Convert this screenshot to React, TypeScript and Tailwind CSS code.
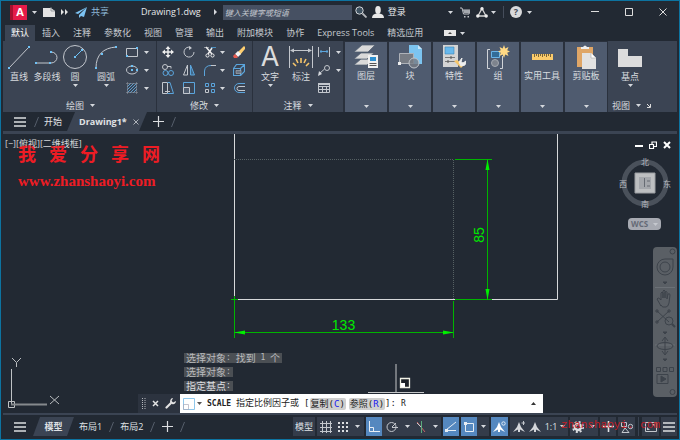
import { useState, type ReactNode } from 'react'

const ribbonTabs = ['默认', '插入', '注释', '参数化', '视图', '管理', '输出', '附加模块', '协作', 'Express Tools', '精选应用']

function Caret({ className = 'text-[#d5d8dd]' }: { className?: string }) {
  return (
    <svg width="5" height="3" viewBox="0 0 5 3" className={`shrink-0 ${className}`}>
      <path d="M0 0h5L2.5 3z" fill="currentColor" />
    </svg>
  )
}

function Icon({ w, h = w, children }: { w: number; h?: number; children: ReactNode }) {
  return (
    <svg width={w} height={h} viewBox={`0 0 ${w} ${h}`} fill="none" stroke="#c3c7cd" strokeWidth="1" className="shrink-0">
      {children}
    </svg>
  )
}

function Dots({ at }: { at: number[][] }) {
  return (
    <g fill="#6ec1f5" stroke="none">
      {at.map(([x, y]) => <rect key={`${x}-${y}`} x={x - 1} y={y - 1} width="2" height="2" />)}
    </g>
  )
}

function BigTool({ label, width, caret, children }: { label: string; width: string; caret?: boolean; children: ReactNode }) {
  return (
    <button className={`flex shrink-0 flex-col items-center pt-1 ${width}`}>
      {children}
      <span className="mt-0.5 whitespace-nowrap leading-3">{label}</span>
      {caret && <span className="mt-px"><Caret /></span>}
    </button>
  )
}

function SmallTool({ label, children }: { label: string; children: ReactNode }) {
  return (
    <button aria-label={label} className="flex h-[18px] items-center justify-center gap-1.5">
      {children}
    </button>
  )
}

function Panel({ title, className, children }: { title: string; className: string; children: ReactNode }) {
  return (
    <section className={`flex shrink-0 flex-col justify-between border-r border-[#2a313d] bg-[#3b4453] ${className}`}>
      <div className="flex">{children}</div>
      <button className="flex h-[13px] items-center justify-center gap-1.5 leading-3">
        {title}<Caret />
      </button>
    </section>
  )
}

const collapsed = [
  {
    label: '图层',
    icon: (
      <Icon w={24}>
        <g fill="#d9d9d9" stroke="#4f5b6f" strokeWidth=".7">
          <path d="M0 20 7 14h13l-7 6z" /><path d="M0 14 7 8h13l-7 6z" /><path d="M0 7 8 0h13l-7 7z" />
        </g>
        <path d="M14 10h10v13H14z" fill="#f0f0f0" stroke="none" />
        <path d="M16 12h6v4h-6z" fill="#2d8fd0" stroke="none" />
        <path d="M15.500 18.500h7M15.500 20.500h7" stroke="#555" />
      </Icon>
    ),
  },
  {
    label: '块',
    icon: (
      <Icon w={24}>
        <path d="M11 0h9l4 4v15H11z" fill="#7cc4f0" stroke="none" /><path d="M20 0v4h4" fill="#c8e6fa" stroke="none" />
        <path d="M1.500 8.500h14v10h-14z" fill="#777c84" stroke="#aeb2b8" />
        <circle cx="16" cy="18" r="5" fill="#777c84" fillOpacity=".8" stroke="#c0c4ca" />
        <path d="M0 17h3v3H0z" fill="#eee" stroke="none" />
      </Icon>
    ),
  },
  {
    label: '特性',
    icon: (
      <Icon w={24}>
        <path d="M1 0h15v22H1z" fill="#d4d4d4" stroke="none" /><path d="M3 2h9v7H3z" fill="#68b8ec" stroke="#3b83b5" strokeWidth=".6" />
        <path d="M3 12.500h10M3 16.500h10" stroke="#777" /><path d="M9 11v3M6 15v3" stroke="#555" />
        <path d="m12 16 7 7 3-3-7-5z" fill="#f5c56a" stroke="none" />
        <path d="M17 17 20 13l-1 4 2 1 3-2-1 4-4 1z" fill="#eee" stroke="#eee" />
      </Icon>
    ),
  },
  {
    label: '组',
    icon: (
      <Icon w={24}>
        <path d="M4 4.500H1.500v19H4M14 23.500h2.500V11" stroke="#d0d3d8" />
        <path d="M5.500 6.500h8v6h-8z" fill="#336c98" stroke="#6bb4e8" />
        <circle cx="9" cy="18" r="3.500" fill="#7d838d" stroke="#a4a9b1" />
        <path d="m18 0 1.200 3.400L22.500 2 21.200 5.200 24 6.500l-2.800 1.200 1.300 3.200-3.300-1.300L18 13l-1.300-3.400-3.200 1.300 1.300-3.200L12 6.500l2.800-1.300L13.500 2l3.200 1.400z" fill="#ffd985" stroke="none" />
      </Icon>
    ),
  },
  {
    label: '实用工具',
    icon: (
      <Icon w={24}>
        <path d="M2 9h21v6H2z" fill="#fbcb6b" stroke="none" />
        <path d="M4.500 9v3M6.500 9v2M8.500 9v3M10.500 9v2M12.500 9v3M14.500 9v2M16.500 9v3M18.500 9v2M20.500 9v3" stroke="#7a6437" />
      </Icon>
    ),
  },
  {
    label: '剪贴板',
    icon: (
      <Icon w={24}>
        <path d="M3 2h16v20H3z" fill="#dfa667" stroke="none" /><path d="M7 2h2q2-3 4 0h2v2H7z" fill="#eee" stroke="none" />
        <path d="M8 8h9l5 5v11H8z" fill="#e2e2e2" stroke="none" /><path d="M17 8v5h5" fill="#fff" stroke="#aaa" strokeWidth=".6" />
      </Icon>
    ),
  },
]

function TitleBar() {
  return (
    <header className="flex h-6 items-center pb-0.5 pl-[9px]">
      <button aria-label="应用程序菜单" className="flex shrink-0 items-center gap-[5px]">
        <span className="flex h-[15px] w-[17px] items-center justify-center border-l-3 border-[#a5102f] bg-[#e51b48] text-[11px] leading-3 font-bold text-white">A</span>
        <Caret />
      </button>
      <button aria-label="新建" className="ml-1.5 shrink-0">
        <Icon w={12} h={10}><path d="M0 1h8l4 3v6H0z" fill="#e3e3e3" stroke="none" /><path d="M8 0v4h4" stroke="#8b8f96" strokeWidth=".8" /></Icon>
      </button>
      <button aria-label="更多" className="ml-1.5 shrink-0">
        <Icon w={7} h={6}><path d="M0 0 3 3 0 6zM4 0l3 3-3 3z" fill="#e3e3e3" stroke="none" /></Icon>
      </button>
      <button className="ml-[7px] flex shrink-0 items-center gap-1 text-[9px] text-[#8fb9d8]">
        <Icon w={12} h={11}><path d="M12 0 0 6l3 1zM12 0 4 8v3l2-2 3 1z" fill="#7cc3f3" stroke="none" /></Icon>
        共享
      </button>
      <h1 className="ml-8 shrink-0 text-[9px] text-[#e6e8ea]">Drawing1.dwg</h1>
      <svg width="3" height="6" viewBox="0 0 3 6" className="ml-[13px] shrink-0"><path d="M0 0 3 3 0 6z" fill="#d5d8dd" /></svg>
      <input aria-label="搜索" placeholder="键入关键字或短语"
        className="ml-1.5 h-[15px] w-[129px] shrink-0 bg-[#465062] px-0.5 text-[8px] italic placeholder:text-[#c2c6cd] outline-none" />
      <button aria-label="查找" className="ml-[3px] shrink-0">
        <Icon w={12}><circle cx="4.500" cy="4.500" r="3.700" stroke="#d2d5d9" fill="#3f5261" /><path d="m7.500 7.500 4 4" stroke="#b4b7bc" strokeWidth="1.800" /></Icon>
      </button>
      <button className="ml-[5px] flex shrink-0 items-center gap-1 text-[9px] text-[#e6e8ea]">
        <Icon w={12} h={12}><g fill="#e8e8e8" stroke="none"><ellipse cx="6" cy="4" rx="2.800" ry="4" /><path d="M0 12c0-3 2-4 4.500-4.500h3C10 8 12 9 12 12z" /></g></Icon>
        登录
      </button>
      <div className="flex-1" />
      <Caret />
      <button aria-label="购物车" className="ml-[7px] shrink-0">
        <Icon w={10} h={11}><path d="M0 1h2l1.500 6H9L10 3H3" stroke="#c0c3c8" /><path d="M3 3h7L9 6H4z" fill="#a4a8ae" stroke="none" /><path d="M4 9h1.500v1.500H4zM7.500 9H9v1.500H7.500z" fill="#c0c3c8" stroke="none" /></Icon>
      </button>
      <button aria-label="应用程序" className="ml-1.5 flex shrink-0 items-center gap-[3px]">
        <Icon w={12} h={11}><path d="M6 1.500 10 9H2z" stroke="#d5d5d5" strokeWidth="1.300" /><g fill="#ededed" stroke="none"><circle cx="6" cy="1.800" r="1.700" /><circle cx="1.800" cy="9" r="1.700" /><circle cx="10.200" cy="9" r="1.700" /></g></Icon>
        <Caret />
      </button>
      <span className="ml-[7px] h-3 w-px bg-[#454d5b]" />
      <button aria-label="帮助" className="ml-1.5 flex shrink-0 items-center gap-[5px]">
        <span className="flex size-3 items-center justify-center rounded-full bg-[#d8d9db] text-[9px] leading-3 font-bold text-[#434a57]">?</span>
        <Caret />
      </button>
      <div className="ml-[59px] flex shrink-0 items-center gap-[26px] pr-3">
        <button aria-label="最小化"><Icon w={8}><path d="M0 3.500h8" stroke="#ddd" /></Icon></button>
        <button aria-label="最大化"><Icon w={8}><path d="M.5.5h7v7h-7z" stroke="#ddd" /></Icon></button>
        <button aria-label="关闭"><Icon w={8}><path d="m.5.5 7 7m0-7-7 7" stroke="#ddd" /></Icon></button>
      </div>
    </header>
  )
}

function Ribbon() {
  return (
    <div className="mx-0.5 flex h-[71px] shrink-0 overflow-hidden bg-[#2a313d] text-[9px] text-[#d8dbdf]">
      <Panel title="绘图" className="w-[154px] pl-0.5">
        <BigTool label="直线" width="w-7"><Icon w={24}><path d="M2 23 22 2" /><Dots at={[[2, 23], [22, 2]]} /></Icon></BigTool>
        <BigTool label="多段线" width="w-7"><Icon w={24}><path d="M1 18h15a6 5.500 0 0 0 0-11" /><Dots at={[[1, 18], [15, 18], [16, 7]]} /></Icon></BigTool>
        <BigTool label="圆" width="w-7" caret><Icon w={24}><circle cx="12" cy="12" r="11.500" /><path d="m12 12 6-6" stroke="#6ec1f5" /><Dots at={[[12, 12], [19, 5]]} /></Icon></BigTool>
        <BigTool label="圆弧" width="w-[34px]" caret><Icon w={24}><path d="M2 23C2 10 9 3 22 2" /><Dots at={[[2, 23], [8, 9], [22, 2]]} /></Icon></BigTool>
        <div className="flex w-[28px] flex-col pt-0.5">
          <SmallTool label="矩形"><Icon w={12}><path d="M.5 2.500h11v8H.5z" /><Dots at={[[1, 10], [11, 2]]} /></Icon><Caret /></SmallTool>
          <SmallTool label="椭圆"><Icon w={12}><ellipse cx="6" cy="6" rx="5.500" ry="4" /><Dots at={[[6, 6], [6, 2], [11, 6]]} /></Icon><Caret /></SmallTool>
          <SmallTool label="图案填充"><Icon w={12}><path d="M1 5 5 1M1 8l7-7M1 11 11 1M4 11l7-7M7 11l4-4" stroke="#5b9dce" /><path d="M0 1.500h12M0 10.500h12M1.500 0v12M10.500 0v12" stroke="#8b919b" strokeWidth=".6" /></Icon><Caret /></SmallTool>
        </div>
      </Panel>

      <Panel title="修改" className="w-24">
        <div className="grid grid-cols-[21px_21px_21px_7px_24px] items-center pt-0.5">
          <SmallTool label="移动"><Icon w={12}><path d="M6 1v10M1 6h10" stroke="#eee" strokeWidth="1.400" /><path d="m6 0 2.500 3h-5zM6 12 3.500 9h5zM0 6l3-2.500v5zM12 6 9 8.500v-5z" fill="#eee" stroke="none" /></Icon></SmallTool>
          <SmallTool label="旋转"><Icon w={12}><path d="M8 1.500A5 5 0 1 0 11 6" /><path d="M6 0v4l3-2z" fill="#c3c7cd" stroke="none" /></Icon></SmallTool>
          <SmallTool label="修剪"><Icon w={12}><path d="M0 1.500h5" stroke="#8f959e" /><path d="M7 1.500h5" stroke="#4a8fc0" /><path d="m2 1 6 7M8 2 4 8" stroke="#eee" strokeWidth="1.500" /><circle cx="3.500" cy="9.500" r="1.600" stroke="#eee" /><circle cx="8.500" cy="9.500" r="1.600" stroke="#eee" /></Icon></SmallTool>
          <Caret />
          <SmallTool label="删除"><Icon w={12}><path d="m5 6 6-6 1 1v2L7 9z" fill="#ffcf70" stroke="none" /><path d="M2 8 5 5l3 3-3 3z" fill="#f4f4f4" stroke="none" /><path d="m0 10 2-2 3 3-1 1H1z" fill="#e75b50" stroke="none" /></Icon></SmallTool>

          <SmallTool label="复制"><Icon w={12}><circle cx="3" cy="3" r="2.500" /><path d="M5 2.500h4v2" /><circle cx="3.500" cy="9" r="2.500" stroke="#5ba5dc" /><circle cx="9" cy="9" r="2.500" stroke="#5ba5dc" /></Icon></SmallTool>
          <SmallTool label="镜像"><Icon w={12}><path d="M4.500 1v10H.5z" /><path d="M7.500 1v10h4z" stroke="#5ba5dc" fill="#40698b" /></Icon></SmallTool>
          <SmallTool label="圆角"><Icon w={12}><path d="M.5 12V7Q1 1.500 7 1.500" stroke="#5ba5dc" /><path d="M7 1.500h5" /></Icon></SmallTool>
          <Caret />
          <SmallTool label="分解"><Icon w={12}><path d="M.5 4.500h7v7h-7zM.5 4.500l3-4h8v7l-4 4M7.500 4.500l4-4" stroke="#5ba5dc" strokeWidth="1.200" /><path d="M3 6.500h5v3H3z" fill="#697382" stroke="#aeb3bb" strokeWidth=".6" /></Icon></SmallTool>

          <SmallTool label="拉伸"><Icon w={12}><path d="M.5.5h5v11h-5zM3 9.500h5" /><path d="M5.500.5H8l3.500 11h-6" stroke="#5ba5dc" /></Icon></SmallTool>
          <SmallTool label="缩放"><Icon w={12}><path d="M.5.5h11v11H.5z" stroke="#5ba5dc" /><path d="M.5 5.500h6v6h-6z" fill="#515d6e" /></Icon></SmallTool>
          <SmallTool label="阵列"><Icon w={12}><path d="M1.500 1.500h3v3h-3zM7.500 1.500h3v3h-3zM7.500 7.500h3v3h-3z" stroke="#5ba5dc" /><path d="M1.500 7.500h3v3h-3z" /></Icon></SmallTool>
          <Caret />
          <SmallTool label="偏移"><Icon w={12}><path d="M12 1.500H6a4.500 4.500 0 0 0 0 9h6" stroke="#5ba5dc" /><path d="M12 4.500H6a1.500 1.500 0 0 0 0 4h6" /></Icon></SmallTool>
        </div>
      </Panel>

      <Panel title="注释" className="w-[91px]">
        <BigTool label="文字" width="w-[34px]" caret>
          <span className="flex h-6 items-center font-[Inter] text-[27px] leading-6 text-[#dcdcdc]">A</span>
        </BigTool>
        <BigTool label="标注" width="w-7">
          <Icon w={24}>
            <path d="M.5 1v22M23.500 1v22M2 5.500h20" /><path d="m1 5.500 4-2v4zM23 5.500l-4-2v4z" fill="#c3c7cd" stroke="none" />
            <path d="M12 13v5M7 14l2 4M17 14l-2 4M4 18l3 3M20 18l-3 3" stroke="#f5c56a" strokeWidth="1.600" />
          </Icon>
        </BigTool>
        <div className="flex w-[28px] flex-col pt-0.5">
          <SmallTool label="线性"><Icon w={12}><path d="M.5 1v10M11.500 1v10" /><path d="M2 5.500h8M3 4v3M9 4v3" stroke="#5ba5dc" /></Icon><Caret /></SmallTool>
          <SmallTool label="引线"><Icon w={12}><circle cx="9" cy="4" r="2.500" /><path d="M6.500 5 1 10" /><path d="m0 12 1-5 3 3z" fill="#d4d7dc" stroke="none" /></Icon><Caret /></SmallTool>
          <button aria-label="表格" className="flex h-[18px] items-center pl-[3px]"><Icon w={12}><path d="M.5 1.500h11v9H.5zM.5 4.500h11M.5 7.500h11M4.500 4v6M8.500 4v6" /><path d="M0 1h12v2H0z" fill="#c3c7cd" stroke="none" /></Icon></button>
        </div>
      </Panel>

      <div className="flex shrink-0 gap-0.5 px-px">
        {collapsed.map(({ label, icon }) => (
          <button key={label} className="flex w-[42px] flex-col items-center border-t border-[#2a313d] bg-[#4f5b6f] pt-[3px] pb-1">
            {icon}
            <span className="mt-px leading-3 whitespace-nowrap">{label}</span>
            <span className="mt-auto"><Caret /></span>
          </button>
        ))}
      </div>

      <section className="flex min-w-0 flex-1 flex-col justify-between bg-[#3b4453]">
        <BigTool label="基点" width="w-11" caret>
          <Icon w={24}><path d="M0 4h10v7h14v11H0z" fill="#dcdcdc" stroke="none" /></Icon>
        </BigTool>
        <div className="flex h-[13px] items-center gap-1.5 pl-1 leading-3">
          视图<Caret />
          <Icon w={4}><path d="m0 0 3 3M0 3.500h3.500V0" stroke="#ddd" /></Icon>
        </div>
      </section>
    </div>
  )
}

function Slash() {
  return <svg width="5" height="10" viewBox="0 0 5 10" className="shrink-0"><path d="m.5 10 4-10" stroke="#565e6b" /></svg>
}

function Plus() {
  return <Icon w={11}><path d="M5.500 0v11M0 5.500h11" stroke="#dcdee1" strokeWidth="1.200" /></Icon>
}

function Burger() {
  return <Icon w={12} h={10}><path d="M0 1h12M0 5h12M0 9h12" stroke="#dcdee1" strokeWidth="1.400" /></Icon>
}

function FileTabs() {
  return (
    <div className="flex h-[19px] shrink-0 items-center pl-[13px] text-[9px] text-[#e0e2e5]">
      <button aria-label="菜单"><Burger /></button>
      <span className="ml-2"><Slash /></span>
      <button className="ml-[5px]">开始</button>
      <div className="ml-[5px] flex h-full w-[80px] items-center gap-1.5 bg-[#3b4453] pl-3 [clip-path:polygon(8px_0,100%_0,calc(100%-8px)_100%,0_100%)]">
        <button className="font-bold">Drawing1*</button>
        <button aria-label="关闭选项卡"><Icon w={6}><path d="m.5.5 5 5m0-5-5 5" stroke="#aeb3ba" /></Icon></button>
      </div>
      <button aria-label="新图形" className="ml-1.5"><Plus /></button>
      <span className="ml-[7px]"><Slash /></span>
    </div>
  )
}

function Drawing() {
  return (
    <svg width="680" height="279" viewBox="1 134 680 279" fill="none" className="absolute top-0 left-0 max-w-none">
      <path d="M234.500 134v165.500h323V134" stroke="#d6d8da" />
      <path d="M234 159.500h219.500v140" stroke="#566063" strokeDasharray="1 1" />
      <g stroke="#00b400">
        <path d="M234.500 301v37M453.500 301v37M234 332.500h220" />
        <path d="M455 159.500h37M455 299.500h37M487.500 159v141" />
        <path d="M231 299.500h7M234.500 296v7" />
      </g>
      <path d="M234 332.500l11-2v4zM454 332.500l-11-2v4zM487.500 159l-2 11h4zM487.500 300l-2-11h4z" fill="#00f000" />
      <g fill="#00e800" className="font-['Liberation_Sans'] text-[14px]" textAnchor="middle">
        <text x="343.500" y="330">133</text>
        <text transform="translate(484 235) rotate(-90)">85</text>
      </g>

      {/* crosshair and its scale badge */}
      <path d="M396 364v29M368 392.500h56" stroke="#c5c7c9" />
      <path d="M400.500 378.500h9v9h-9z" fill="#1d2127" stroke="#f1f1e6" strokeWidth="1.300" />
      <path d="M401 383h4v4h-4z" fill="#fff" />

      {/* UCS icon */}
      <path d="M11.500 404V369M8.500 401.500h6v6h-6z" stroke="#bfc2c5" />
      <path d="M11 404.500h36" stroke="#85898d" strokeWidth="2" />
      <path d="m12 358 4.500 4.500L21 358M16.500 362.500V367M50 396l9 8M59 396l-9 8" stroke="#b9bcbf" />
    </svg>
  )
}

function ViewCube() {
  return (
    <div className="absolute top-[23px] right-2 h-[52px] w-[54px] text-[8px] leading-[10px] text-[#b9bcc1]">
      <svg width="54" height="52" viewBox="0 0 54 52" className="absolute inset-0">
        <circle cx="28" cy="26" r="21" fill="none" stroke="#4a515b" strokeWidth="5" />
        <path d="M18 16h20v20H18z" fill="#bdbfc1" stroke="#9b9ea2" />
        <path d="M22 20h12v12H22z" fill="#a4a7ac" />
        <path d="M27.500 21v9M30 24h3M30 29h3" stroke="#666b73" />
      </svg>
      <span className="absolute top-0 left-6">北</span>
      <span className="absolute top-[22px] left-0.5">西</span>
      <span className="absolute top-[22px] right-0">东</span>
      <span className="absolute bottom-0 left-6">南</span>
    </div>
  )
}

function NavBar() {
  return (
    <nav className="absolute top-[113px] right-0.5 flex h-[150px] w-6 flex-col items-center rounded-sm bg-[#5a5f65]">
      <svg width="24" height="150" viewBox="0 0 24 150" fill="none" stroke="#3d434b">
        <circle cx="19.500" cy="4.500" r="2.500" />
        <path d="M4 20a8 8 0 0 1 8-8h8v8a8 8 0 0 1-16 0z" /><circle cx="12" cy="20" r="5" />
        <path d="M2 40.500h20M2 98h20" stroke="#6b7076" />
        <path d="m10 35h4l-2 2zM10 85h4l-2 2zM10 112h4l-2 2z" fill="#3d434b" />
        <path d="M8 59 4 52q1-2 3 0l1 1V46q1-2 2 0v5-7q1-2 2 0v7-6q2-1 2 0v7l1-5q2-1 2 1l-1 8q-1 4-3 4h-3q-1 0-2-2z" />
        <path d="m4 64 12 11M16 64 4 75M3 63h2v2H3zM15 63h2v2h-2zM3 74h2v2H3z" /><circle cx="16" cy="74" r="4" /><path d="m19 77 3 3" strokeWidth="2" />
        <path d="M12 91v16M9 94l3-4 3 4M9 104l3 4 3-4" /><ellipse cx="12" cy="99" rx="8" ry="3.500" />
        <path d="M3.500 120.500h4v4h-4zM10 120.500h4v4h-4zM16.500 120.500h4v4h-4zM4 127.500h11v9H4z" /><path d="m8 129 5 3-5 3z" fill="#3d434b" />
        <circle cx="19.500" cy="145" r="2.500" />
      </svg>
    </nav>
  )
}

function CommandLine() {
  const [value, setValue] = useState('R')
  const row = 'flex h-[10px] items-center bg-[#4b4f54] px-0.5 whitespace-pre'
  return (
    <div className="absolute bottom-0 left-[137px] flex w-[405px] flex-col">
      <ul className="flex flex-col items-start gap-1 pb-[3px] pl-[46px] font-['DejaVu_Sans_Mono','Noto_Sans_CJK_SC',monospace] text-[8px] text-[#b9bbbd]">
        <li className={row}><span className="text-[10px]">选择对象</span>: <span className="text-[10px]">找到</span> 1 <span className="text-[10px]">个</span></li>
        <li className={row}><span className="text-[10px]">选择对象</span>:</li>
        <li className={`${row} text-[#dddfe0]`}><span className="text-[10px]">指定基点</span>:</li>
      </ul>
      <div className="flex h-[19px]">
        <div className="flex w-[42px] shrink-0 items-center justify-between bg-[#2c333f] px-1">
          <Icon w={4} h={12}><path d="M.5 0v12M3 0v12" stroke="#b5b8bd" strokeDasharray="1 1" /></Icon>
          <button aria-label="关闭"><Icon w={7}><path d="m1 1 5 5m0-5L1 6" stroke="#e3e3e3" strokeWidth="1.500" /></Icon></button>
          <button aria-label="自定义"><Icon w={11}><path d="m1.500 9.500 5-5" stroke="#e3e3e3" strokeWidth="2.200" strokeLinecap="round" /><path d="M8 0 6.500 3l1.500 1.500L11 3c0 2-2 4-4 3L5 4c0-2 1-4 3-4z" fill="#e3e3e3" stroke="none" /></Icon></button>
        </div>
        <label className="flex min-w-0 flex-1 items-center bg-white px-[3px] font-['DejaVu_Sans_Mono','Noto_Sans_CJK_SC',monospace] text-[9px] whitespace-nowrap text-[#222]">
          <Icon w={12}><path d="M.5.5h11v11H.5z" stroke="#8fc8ec" /><path d="M.5 6.500h5v5h-5z" stroke="#aab" strokeWidth=".7" /></Icon>
          <span className="mr-[5px] ml-0.5"><Caret className="text-[#555]" /></span>
          <b className="mr-[5px] text-[8px]">SCALE</b>
          指定比例因子或
          <span className="ml-[5px]">[</span>
          <span className="rounded-xs bg-[#cfcfcf] px-px leading-3">复制(<span className="text-[#2020f0]">C</span>)</span>
          <span className="ml-[3px] rounded-xs bg-[#cfcfcf] px-px leading-3">参照(<span className="text-[#2020f0]">R</span>)</span>
          <span>]:</span>
          <input value={value} onChange={(e) => setValue(e.target.value)} className="ml-[5px] min-w-0 flex-1 text-[8px] outline-none" />
          <svg width="5" height="3" viewBox="0 0 5 3" className="mr-1"><path d="M0 3h5L2.500 0z" fill="#333" /></svg>
        </label>
      </div>
    </div>
  )
}

function Canvas() {
  return (
    <main className="relative min-h-[279px] flex-1 overflow-hidden">
      <Drawing />
      <p className="absolute top-1 left-1 text-[9px] leading-3 text-[#d5d7d9]">[−][俯视][二维线框]</p>
      <div className="absolute top-2 left-[17px] text-[#ee1c24]">
        <p className="flex gap-[13px] text-[18px] leading-6 font-bold">
          {[...'我爱分享网'].map((c) => <span key={c}>{c}</span>)}
        </p>
        <p className="mt-[5px] font-['Liberation_Serif'] text-[15px] leading-5 font-bold">www.zhanshaoyi.com</p>
      </div>
      <div className="absolute top-[7px] right-2 flex items-center gap-1.5">
        <button aria-label="最小化视口"><Icon w={8}><path d="M0 5h8" stroke="#fff" strokeWidth="2" /></Icon></button>
        <button aria-label="还原视口"><Icon w={8}><path d="M.5 3.500h4v4h-4zM3 3V1h4.500v4.500H5" stroke="#fff" strokeWidth="1.200" /></Icon></button>
        <button aria-label="关闭视口"><Icon w={8}><path d="m1 1 6 6m0-6L1 7" stroke="#fff" strokeWidth="2" /></Icon></button>
      </div>
      <ViewCube />
      <button className="absolute top-[84px] right-[18px] flex h-3 w-[33px] items-center justify-between rounded-sm bg-[#a7aab2] px-[3px] text-[8px] leading-3 font-bold text-[#656a76]">
        WCS<Caret className="text-[#c5c8ce]" />
      </button>
      <NavBar />
      <CommandLine />
    </main>
  )
}

function StatusButton({ label, width, on, children }: { label: string; width: string; on?: boolean; children: ReactNode }) {
  return (
    <button aria-label={label} aria-pressed={on}
      className={`flex h-[19px] shrink-0 items-center justify-center ${width} ${on ? 'bg-[#5588bf]' : 'bg-[#343c4a]'}`}>
      {children}
    </button>
  )
}

function StatusBar() {
  const person = 'M6 1 8 6l4 5-5-2.500V11H5V8.500L0 11l4-5z'
  return (
    <footer className="relative flex h-6 shrink-0 items-center pr-0.5 pb-px text-[9px] text-[#dfe1e4]">
      <button aria-label="布局菜单" className="ml-[13px]"><Burger /></button>
      <button className="ml-[7px] h-[19px] w-[41px] bg-[#3b4453] font-bold [clip-path:polygon(7px_0,100%_0,calc(100%-7px)_100%,0_100%)]">模型</button>
      <button className="ml-[5px]">布局1</button>
      <span className="ml-[7px]"><Slash /></span>
      <button className="ml-1.5">布局2</button>
      <span className="ml-[7px]"><Slash /></span>
      <button aria-label="新布局" className="ml-[7px]"><Plus /></button>
      <span className="ml-[7px]"><Slash /></span>
      <div className="flex-1" />
      <div className="flex shrink-0 items-center gap-0.5">
        <button className="h-[19px] w-[22px] bg-[#343c4a]">模型</button>
        <div className="flex">
          <StatusButton label="栅格" width="w-[17px]"><Icon w={12}><path d="M0 2.500h12M0 6.500h12M0 10.500h12M2.500 0v12M6.500 0v12M10.500 0v12" /></Icon></StatusButton>
          <StatusButton label="捕捉" width="w-[17px]"><Icon w={10}><path d="M0 1h10M0 5h10M0 9h10" stroke="#dcdee1" strokeWidth="2" strokeDasharray="2 2" /></Icon></StatusButton>
          <StatusButton label="捕捉设置" width="w-[13px]"><Caret /></StatusButton>
        </div>
        <div className="flex">
          <StatusButton label="正交" width="w-4" on><Icon w={12}><path d="M1.500 0v10.500H12M1.500 6.500h4v4" stroke="#e8eef5" /></Icon></StatusButton>
          <StatusButton label="极轴追踪" width="w-[19px]"><Icon w={12}><circle cx="5.500" cy="6" r="4.500" /><path d="M6 6.500h6M6 6l4-4" /></Icon></StatusButton>
          <StatusButton label="极轴设置" width="w-3"><Caret /></StatusButton>
          <StatusButton label="等轴测" width="w-4"><Icon w={12}><path d="m2 1 8 10" stroke="#c86464" /><path d="M6.500 0v12" stroke="#5ba97c" /><path d="M2 2l4 4" stroke="#c3c7cd" /></Icon></StatusButton>
          <StatusButton label="等轴测设置" width="w-3"><Caret /></StatusButton>
        </div>
        <StatusButton label="对象捕捉追踪" width="w-4" on><Icon w={12}><path d="m1 9 10-8M1 9.500h10" stroke="#e8eef5" /><path d="M0 8h3v3H0z" fill="#e8eef5" stroke="none" /></Icon></StatusButton>
        <div className="flex">
          <StatusButton label="对象捕捉" width="w-4" on><Icon w={12}><path d="M2.500 2.500h8v8h-8z" stroke="#e8eef5" /><path d="M1 1h3v3H1z" fill="#e8eef5" stroke="none" /></Icon></StatusButton>
          <StatusButton label="捕捉模式" width="w-3"><Caret /></StatusButton>
        </div>
        <StatusButton label="注释可见性" width="w-[17px]" on><Icon w={13} h={12}><path d={person} fill="#fff" stroke="none" /><circle cx="10.500" cy="2.500" r="1.700" stroke="#dfeaf5" /></Icon></StatusButton>
        <div className="flex">
          <StatusButton label="自动缩放" width="w-[17px]"><Icon w={12}><path d={person} fill="#d4d6da" stroke="none" /><path d="M10.500 0v4M8.500 2h4" /></Icon></StatusButton>
          <StatusButton label="注释比例" width="w-[15px]"><Icon w={12}><path d={person} fill="#d4d6da" stroke="none" /></Icon></StatusButton>
          <button className="flex h-[19px] w-[26px] items-center justify-center gap-[3px] bg-[#343c4a]">1:1<Caret /></button>
        </div>
        <div className="flex">
          <StatusButton label="切换工作空间" width="w-4"><Icon w={12}><circle cx="6" cy="6" r="3" stroke="#dcdee1" strokeWidth="2.500" /><circle cx="6" cy="6" r="5" stroke="#dcdee1" strokeWidth="2" strokeDasharray="2 1.930" /></Icon></StatusButton>
          <StatusButton label="工作空间设置" width="w-3"><Caret /></StatusButton>
        </div>
        <StatusButton label="注释监视器" width="w-4"><Icon w={11}><path d="M5.500 0v11M0 5.500h11" stroke="#e3e5e8" strokeWidth="1.600" /></Icon></StatusButton>
        <StatusButton label="隔离对象" width="w-[17px]"><Icon w={12}><path d="M.5 1.500h5v4h-5zM4 7l4 4.500H1z" /><circle cx="9.500" cy="5.500" r="2.200" /></Icon></StatusButton>
        <span className="mx-px h-[19px] w-px bg-[#3b4453]" />
        <StatusButton label="全屏显示" width="w-[17px]"><Icon w={12}><path d="M.5 1.500h11v9H.5z" /><path d="M2 9V6l3 3zM10 3v3L7 3z" fill="#c3c7cd" stroke="none" /></Icon></StatusButton>
        <StatusButton label="自定义" width="w-4"><Burger /></StatusButton>
      </div>
      <span className="pointer-events-none absolute right-[19px] bottom-1.5 font-['Liberation_Mono'] text-[11px] leading-4 text-[#c51c26]">zhanshaoyi. com</span>
    </footer>
  )
}

export default function App() {
  const [tab, setTab] = useState('默认')
  return (
    <div className="flex min-h-screen flex-col overflow-hidden border border-[#0d73a0] bg-[#222933] font-['Open_Sans','Noto_Sans_CJK_SC',sans-serif]">
      <TitleBar />
      <nav className="flex h-4 shrink-0 items-center gap-px pl-1 text-[9px] text-[#c5c9cf]">
        {ribbonTabs.map((t) => (
          <button key={t} onClick={() => setTab(t)}
            className={`h-full px-1.5 leading-4 whitespace-nowrap ${t === tab ? 'bg-[#3b4453] text-white' : ''}`}>
            {t}
          </button>
        ))}
        <button aria-label="最小化功能区" className="ml-3.5 flex items-center gap-1">
          <Icon w={12} h={6}><path d="M0 0h12v6H0z" fill="#e6e6e6" stroke="none" /><path d="M4 4h4L6 2z" fill="#444" stroke="none" /></Icon>
          <Caret />
        </button>
      </nav>
      <Ribbon />
      <FileTabs />
      <div className="mx-0.5 h-[3px] shrink-0 bg-[#3b4453]" />
      <Canvas />
      <div className="mx-0.5 h-0.5 shrink-0 bg-[#3b4453]" />
      <StatusBar />
    </div>
  )
}
